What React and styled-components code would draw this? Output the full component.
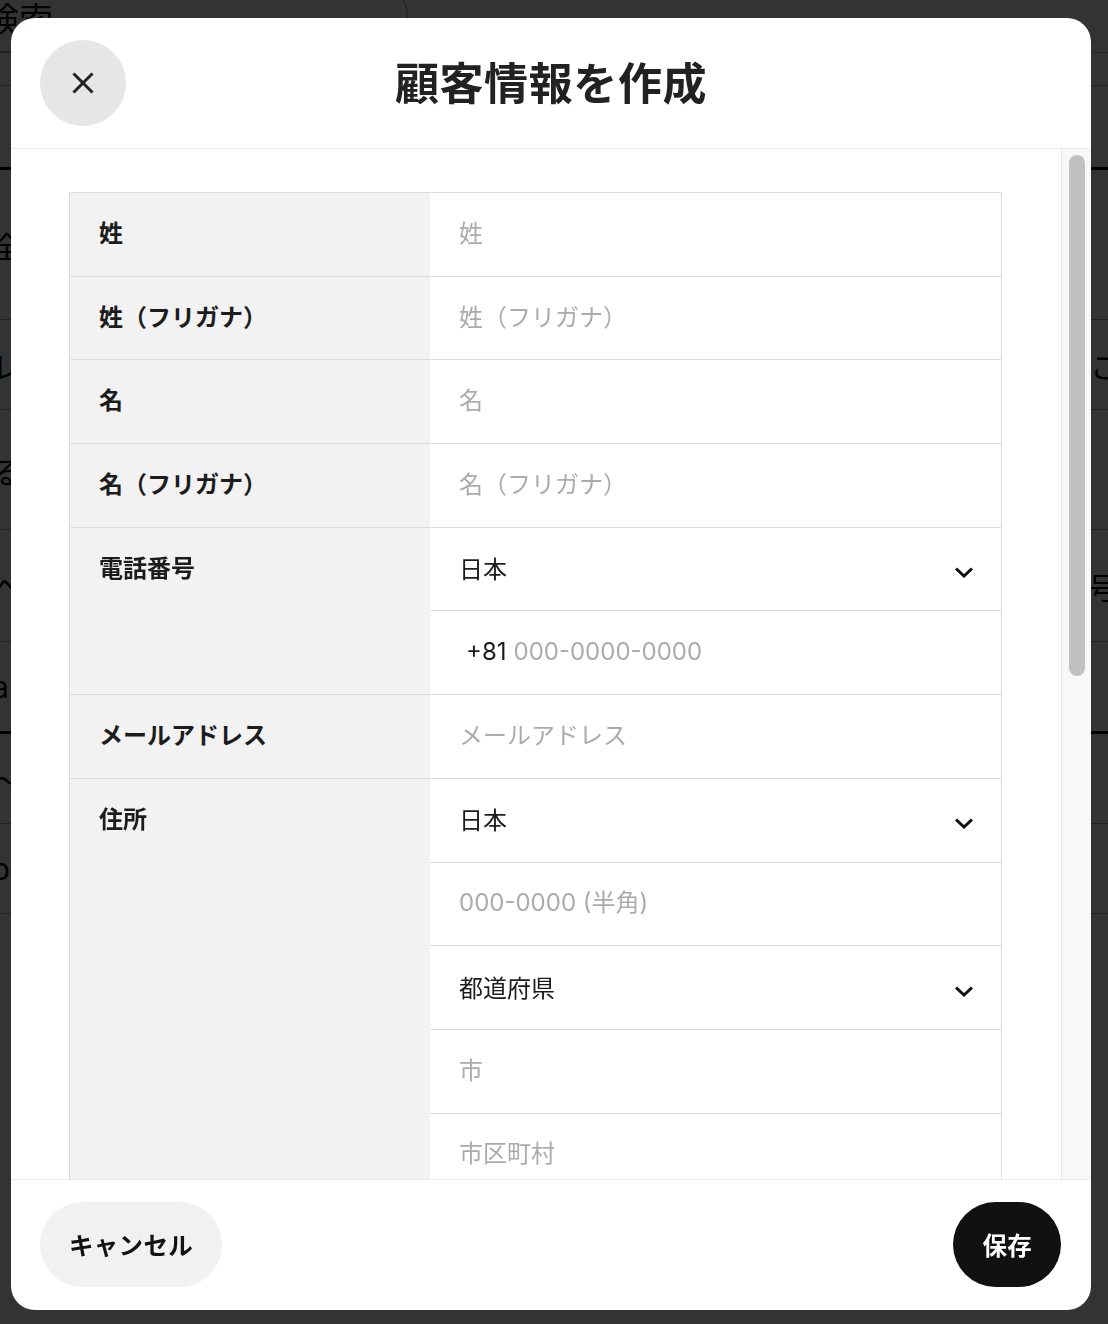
import React from "react";
import styled, { createGlobalStyle } from "styled-components";

const FONT = `Inter, "Noto Sans CJK JP", "Noto Sans", sans-serif`;

const Global = createGlobalStyle`
  html, body { margin: 0; padding: 0; }
  body { background: #fff; font-family: ${FONT}; color: #222; }
  * { box-sizing: border-box; }
`;

/* ---------- background page (behind the overlay) ---------- */
const Page = styled.div`
  width: 1108px;
  height: 1324px;
  overflow: hidden;
  background: #fff;
`;
const TopBar = styled.div`
  display: flex;
  align-items: center;
  height: 53px;
  border-bottom: 1px solid #bbb;
  padding-right: 700px;
`;
const Search = styled.div`
  flex: 1;
  height: 70px;
  margin-top: -18px;
  border: 1px solid #999;
  border-radius: 0 36px 36px 0;
  font-size: 34px;
  padding: 10px 0 0 0;
  margin-left: -16px;
  color: #111;
`;
const BgRow = styled.div`
  display: flex;
  justify-content: space-between;
  align-items: center;
  height: ${(p) => p.$h || 90}px;
  border-bottom: ${(p) => (p.$thick ? "3px solid #000" : "1px solid #aaa")};
  font-size: 30px;
  color: #000;
`;
const BgText = styled.span`
  margin-left: ${(p) => p.$ml || -8}px;
  margin-right: ${(p) => p.$mr || 0}px;
`;

/* ---------- overlay and modal ---------- */
const Overlay = styled.div`
  position: fixed;
  inset: 0;
  background: rgba(0, 0, 0, 0.8);
  display: flex;
  padding: 18px 17px 14px 11px;
`;
const Modal = styled.div`
  flex: 1;
  background: #fff;
  border-radius: 24px;
  display: flex;
  flex-direction: column;
  overflow: hidden;
`;
const Header = styled.header`
  display: grid;
  grid-template-columns: 86px 1fr 86px;
  align-items: center;
  height: 131px;
  padding: 0 29px;
  border-bottom: 1px solid #ececec;
  flex-shrink: 0;
`;
const CloseButton = styled.button`
  width: 86px;
  height: 86px;
  border-radius: 50%;
  border: none;
  background: #e6e6e6;
  display: flex;
  align-items: center;
  justify-content: center;
  padding: 0;
  cursor: pointer;
`;
const Title = styled.h1`
  margin: 0 0 4px;
  text-align: center;
  font-size: 44px;
  font-weight: 700;
  color: #222;
  letter-spacing: 0.6px;
`;
const BodyWrap = styled.div`
  flex: 1;
  min-height: 0;
  display: flex;
`;
const ScrollArea = styled.div`
  flex: 1;
  overflow-y: auto;
  scrollbar-width: none;
  padding: 43px 59px 60px 58px;
  &::-webkit-scrollbar { display: none; }
`;
const ScrollTrack = styled.div`
  width: 30px;
  flex-shrink: 0;
  background: #f8f8f8;
  border-left: 1px solid #e6e6e6;
  padding: 6px 6px 0 7px;
`;
const ScrollThumb = styled.div`
  height: 521px;
  border-radius: 8px;
  background: #c1c1c1;
`;
const Table = styled.div`
  border: 1px solid #dcdcdc;
`;
const Row = styled.div`
  display: grid;
  grid-template-columns: 360px 1fr;
  & + & { border-top: 1px solid #dcdcdc; }
`;
const Label = styled.div`
  background: #f2f2f2;
  padding: 23px 30px 0 29px;
  font-size: 24px;
  line-height: 36px;
  font-weight: 700;
  color: #1c1c1c;
`;
const Fields = styled.div`
  display: flex;
  flex-direction: column;
`;
const Field = styled.label`
  box-sizing: content-box;
  display: flex;
  align-items: center;
  height: ${(p) => p.$h || 82.7}px;
  padding: 0 27px 0 29px;
  font-size: 24px;
  color: #222;
  &:not(:first-child) { border-top: 1px solid #dcdcdc; }
`;
const Input = styled.input`
  flex: 1;
  min-width: 0;
  border: none;
  outline: none;
  background: transparent;
  font-family: ${FONT};
  font-size: 24px;
  color: #222;
  padding: 0;
  margin-top: -2px;
  &::placeholder { color: #ababab; }
`;
const Prefix = styled.span`
  margin-left: 7px;
  margin-right: 7px;
  margin-top: -2px;
  color: #1c1c1c;
`;
const SelectValue = styled.span`
  flex: 1;
  margin-top: -3px;
  color: ${(p) => (p.$placeholder ? "#ababab" : "#1c1c1c")};
`;
const ChevronBox = styled.span`
  display: flex;
  margin-top: 6px;
`;
const Footer = styled.footer`
  flex-shrink: 0;
  height: 131px;
  border-top: 1px solid #ececec;
  display: flex;
  align-items: center;
  justify-content: space-between;
  padding: 0 30px 2px 29px;
`;
const PillButton = styled.button`
  height: 85px;
  padding: 0 ${(p) => (p.$dark ? 29 : 29)}px;
  border-radius: 43px;
  border: none;
  font-family: ${FONT};
  font-size: 24.5px;
  font-weight: 700;
  letter-spacing: 0.3px;
  background: ${(p) => (p.$dark ? "#111" : "#f1f1f1")};
  color: ${(p) => (p.$dark ? "#fff" : "#111")};
  cursor: pointer;
`;

const Chevron = () => (
  <ChevronBox>
    <svg width="20" height="12" viewBox="0 0 20 12" fill="none">
      <path d="M2 2.5 L10 10 L18 2.5" stroke="#111" strokeWidth="3" />
    </svg>
  </ChevronBox>
);

const CloseIcon = () => (
  <svg width="22" height="22" viewBox="0 0 22 22" fill="none">
    <path d="M1.5 1.5 L20.5 20.5 M20.5 1.5 L1.5 20.5" stroke="#222" strokeWidth="3" />
  </svg>
);

const TextField = ({ placeholder, h }) => (
  <Field $h={h}>
    <Input placeholder={placeholder} />
  </Field>
);

const SelectField = ({ value, placeholder }) => (
  <Field>
    <SelectValue $placeholder={placeholder}>{value}</SelectValue>
    <Chevron />
  </Field>
);

const simpleRows = [
  ["姓", "姓"],
  ["姓（フリガナ）", "姓（フリガナ）"],
  ["名", "名"],
  ["名（フリガナ）", "名（フリガナ）"],
];

export default function App() {
  return (
    <>
      <Global />
      <Page>
        <TopBar>
          <Search>検索</Search>
        </TopBar>
        <BgRow $h={33} />
        <BgRow $h={84} $thick />
        <BgRow $h={150}>
          <BgText>全</BgText>
        </BgRow>
        <BgRow $h={90}>
          <BgText>レ</BgText>
          <BgText $mr={-12}>こ</BgText>
        </BgRow>
        <BgRow $h={120}>
          <BgText>る</BgText>
        </BgRow>
        <BgRow $h={112}>
          <BgText>ヘ</BgText>
          <BgText $mr={-10}>号</BgText>
        </BgRow>
        <BgRow $h={92} $thick>
          <BgText>a</BgText>
        </BgRow>
        <BgRow $h={90}>
          <BgText>〜</BgText>
        </BgRow>
        <BgRow $h={90}>
          <BgText>oc</BgText>
        </BgRow>
      </Page>
      <Overlay>
        <Modal role="dialog" aria-label="顧客情報を作成">
          <Header>
            <CloseButton aria-label="閉じる">
              <CloseIcon />
            </CloseButton>
            <Title>顧客情報を作成</Title>
            <span />
          </Header>
          <BodyWrap>
            <ScrollArea>
              <Table>
                {simpleRows.map(([label, ph]) => (
                  <Row key={label}>
                    <Label>{label}</Label>
                    <Fields>
                      <TextField placeholder={ph} />
                    </Fields>
                  </Row>
                ))}
                <Row>
                  <Label>電話番号</Label>
                  <Fields>
                    <SelectField value="日本" />
                    <Field>
                      <Prefix>+81</Prefix>
                      <Input placeholder="000-0000-0000" />
                    </Field>
                  </Fields>
                </Row>
                <Row>
                  <Label>メールアドレス</Label>
                  <Fields>
                    <TextField placeholder="メールアドレス" />
                  </Fields>
                </Row>
                <Row>
                  <Label>住所</Label>
                  <Fields>
                    <SelectField value="日本" />
                    <TextField placeholder="000-0000 (半角)" />
                    <SelectField value="都道府県" />
                    <TextField placeholder="市" />
                    <TextField placeholder="市区町村" />
                    <TextField placeholder="番地" />
                    <TextField placeholder="建物名・部屋番号" />
                  </Fields>
                </Row>
                <Row>
                  <Label>会社名</Label>
                  <Fields>
                    <TextField placeholder="会社名" />
                  </Fields>
                </Row>
                <Row>
                  <Label>部署名</Label>
                  <Fields>
                    <TextField placeholder="部署名" />
                  </Fields>
                </Row>
                <Row>
                  <Label>性別</Label>
                  <Fields>
                    <SelectField value="選択してください" placeholder />
                  </Fields>
                </Row>
                <Row>
                  <Label>メモ</Label>
                  <Fields>
                    <TextField placeholder="メモ" h={200} />
                  </Fields>
                </Row>
              </Table>
            </ScrollArea>
            <ScrollTrack aria-hidden="true">
              <ScrollThumb />
            </ScrollTrack>
          </BodyWrap>
          <Footer>
            <PillButton>キャンセル</PillButton>
            <PillButton $dark>保存</PillButton>
          </Footer>
        </Modal>
      </Overlay>
    </>
  );
}
